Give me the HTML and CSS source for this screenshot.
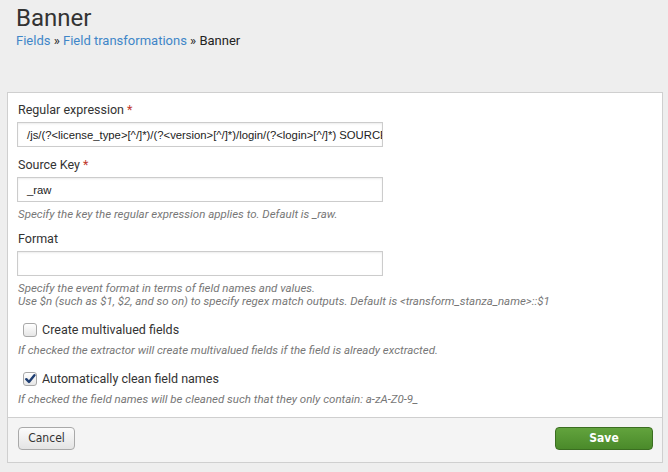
FILE: index.html
```html
<!DOCTYPE html>
<html>
<head>
<meta charset="utf-8">
<link rel="stylesheet" href="styles.css">
</head>
<body>
<div class="header">
  <h1 class="title">Banner</h1>
  <div class="crumbs"><a class="link">Fields</a> » <a class="link">Field transformations</a> » Banner</div>
</div>
<div class="card">
  <div class="card-body">
    <div class="field">
      <div class="label">Regular expression <span class="req">*</span></div>
      <div class="input"><span class="input-text">/js/(?&lt;license_type&gt;[^/]*)/(?&lt;version&gt;[^/]*)/login/(?&lt;login&gt;[^/]*) SOURCE_TYPE</span></div>
    </div>
    <div class="field">
      <div class="label">Source Key <span class="req">*</span></div>
      <div class="input"><span class="input-text">_raw</span></div>
      <div class="help">Specify the key the regular expression applies to. Default is _raw.</div>
    </div>
    <div class="field">
      <div class="label">Format</div>
      <div class="input"></div>
      <div class="help">Specify the event format in terms of field names and values.<br>Use $n (such as $1, $2, and so on) to specify regex match outputs. Default is &lt;transform_stanza_name&gt;::$1</div>
    </div>
    <div class="field check-field">
      <label class="check-row"><span class="box"></span><span class="check-label">Create multivalued fields</span></label>
      <div class="help help-check">If checked the extractor will create multivalued fields if the field is already exctracted.</div>
    </div>
    <div class="field check-field">
      <label class="check-row"><span class="box checked"><svg viewBox="0 0 12 12" width="12" height="12"><path d="M2.3 6.2 L5 9 L10.4 2.2" fill="none" stroke="#1f3f73" stroke-width="2.4" stroke-linecap="round" stroke-linejoin="round"/></svg></span><span class="check-label">Automatically clean field names</span></label>
      <div class="help help-check">If checked the field names will be cleaned such that they only contain: a-zA-Z0-9_</div>
    </div>
  </div>
  <div class="card-footer">
    <button class="btn btn-cancel">Cancel</button>
    <button class="btn btn-save">Save</button>
  </div>
</div>
</body>
</html>
```
FILE: styles.css
```css
html, body {
  margin: 0;
  padding: 0;
  background: #eeeeee;
  font-family: Roboto, "Liberation Sans", sans-serif;
  color: #333;
}
.header {
  padding: 4px 16px 0 16px;
  height: 92px;
  box-sizing: border-box;
}
.title {
  margin: 0;
  font-size: 24px;
  font-weight: 400;
  line-height: 28px;
  color: #333;
}
.crumbs {
  font-size: 13px;
  line-height: 16px;
  margin-top: 1px;
  color: #222;
}
.link {
  color: #3f86c8;
}
.card {
  margin: 0 5px 0 7px;
  background: #fff;
  border: 1px solid #cfcfcf;
}
.card-body {
  padding: 9px 9px 11px 9px;
  display: flex;
  flex-direction: column;
}
.field {
  margin-bottom: 10px;
}
.label {
  font-size: 12.5px;
  line-height: 16px;
  color: #333;
  margin-bottom: 4px;
  padding-left: 1px;
}
.req {
  color: #c0392b;
}
.input {
  width: 366px;
  height: 25px;
  box-sizing: border-box;
  border: 1px solid #cccccc;
  box-shadow: inset 0 1px 2px rgba(0,0,0,0.08);
  padding: 0 6px 0 9px;
  overflow: hidden;
  white-space: nowrap;
  display: flex;
  align-items: center;
}
.input-text {
  font-family: "Liberation Sans", Arial, sans-serif;
  font-size: 11.3px;
  color: #222;
}
.help {
  font-style: italic;
  font-size: 11.5px;
  line-height: 13px;
  color: #777;
  margin-top: 6px;
  padding-left: 1px;
}
.check-field {
  margin-top: 3px;
  margin-bottom: 10px;
}
.check-field:last-child {
  margin-bottom: 0;
}
.help-check {
  margin-top: 5px;
}
.check-row {
  display: flex;
  align-items: center;
  gap: 5px;
  padding-left: 6px;
  font-size: 12.5px;
  line-height: 18px;
}
.box {
  width: 12px;
  height: 12px;
  border: 1px solid #a8a8a8;
  border-radius: 3px;
  background: linear-gradient(#ffffff, #e6e6e6);
  display: flex;
  align-items: center;
  justify-content: center;
}
.box.checked svg {
  display: block;
}
.card-footer {
  background: #f4f4f4;
  border-top: 1px solid #cfcfcf;
  padding: 9px 9px 12px 10px;
  display: flex;
  justify-content: space-between;
}
.btn {
  height: 23px;
  border-radius: 4px;
  font-family: "DejaVu Sans Condensed", "DejaVu Sans", sans-serif;
  font-stretch: condensed;
  font-size: 12px;
  padding: 0;
  line-height: 21px;
}
.btn-cancel {
  width: 57px;
  border: 1px solid #a9a9a9;
  background: linear-gradient(#fbfbfb, #e4e4e4);
  color: #333;
}
.btn-save {
  width: 98px;
  border: 1px solid #3b6e21;
  background: linear-gradient(#62a33d, #4a8a2a);
  color: #fff;
  font-weight: bold;
}
```
